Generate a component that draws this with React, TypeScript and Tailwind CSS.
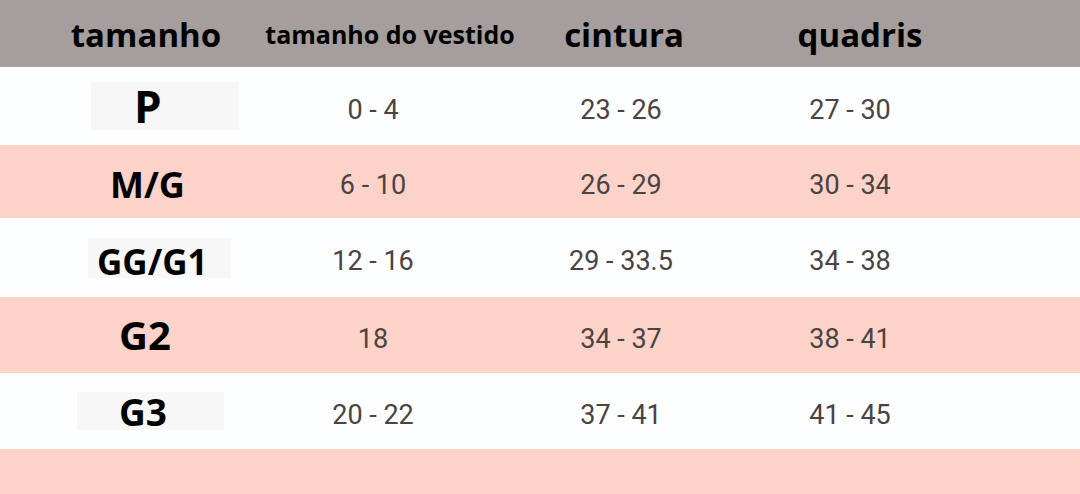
type Row = {
  size: string;
  dress: string;
  waist: string;
  hips: string;
  rowClass: string;
  boxClass: string;
  labelClass: string;
};

const rows: Row[] = [
  {
    size: "P",
    dress: "0 - 4",
    waist: "23 - 26",
    hips: "27 - 30",
    rowClass: "h-[78px] bg-[#fdfeff]",
    boxClass: "ml-[91px] w-[148px] h-[48px] bg-[#f7f7f7]",
    labelClass: "pl-[43px] text-[44px]",
  },
  {
    size: "M/G",
    dress: "6 - 10",
    waist: "26 - 29",
    hips: "30 - 34",
    rowClass: "h-[73px] bg-[#fdd2c8]",
    boxClass: "ml-[110px] h-[48px] mt-[6px]",
    labelClass: "text-[36px]",
  },
  {
    size: "GG/G1",
    dress: "12 - 16",
    waist: "29 - 33.5",
    hips: "34 - 38",
    rowClass: "h-[79px] bg-[#fdfeff]",
    boxClass: "ml-[88px] w-[143px] h-[40px] bg-[#f7f7f7] items-end",
    labelClass: "pl-[9px] text-[35px] translate-y-[1px]",
  },
  {
    size: "G2",
    dress: "18",
    waist: "34 - 37",
    hips: "38 - 41",
    rowClass: "h-[76px] bg-[#fdd2c8]",
    boxClass: "ml-[119px] h-[48px]",
    labelClass: "text-[40px]",
  },
  {
    size: "G3",
    dress: "20 - 22",
    waist: "37 - 41",
    hips: "41 - 45",
    rowClass: "h-[76px] bg-[#fdfeff]",
    boxClass: "ml-[77px] w-[147px] h-[38px] bg-[#f7f7f7]",
    labelClass: "pl-[42px] text-[37px]",
  },
];

function SizeRow({ row }: { row: Row }) {
  return (
    <div className={`flex items-center ${row.rowClass}`}>
      <div className="w-[300px] flex items-center">
        <div className={`flex items-center ${row.boxClass}`}>
          <span
            className={`font-['Open_Sans',sans-serif] font-bold leading-none text-black ${row.labelClass}`}
          >
            {row.size}
          </span>
        </div>
      </div>
      <div className="flex w-[146px] justify-center pt-[8px]">{row.dress}</div>
      <div className="flex w-[350px] justify-center pt-[8px]">{row.waist}</div>
      <div className="flex w-[108px] justify-center pt-[8px]">{row.hips}</div>
    </div>
  );
}

export default function App() {
  return (
    <div className="w-[1080px] h-[494px] overflow-hidden bg-[#fdd2c8] font-['Roboto',sans-serif] text-[27px] text-[#4a4343]">
      <header className="h-[67px] bg-[#a59e9c] flex items-center pt-[2px] font-['Open_Sans',sans-serif] font-bold text-black leading-none">
        <div className="w-[292px] text-center text-[33px]">tamanho</div>
        <div className="w-[196px] flex justify-center text-[25px] whitespace-nowrap">
          tamanho do vestido
        </div>
        <div className="w-[272px] text-center text-[33px]">cintura</div>
        <div className="w-[200px] text-center text-[33px]">quadris</div>
      </header>
      {rows.map((row) => (
        <SizeRow key={row.size} row={row} />
      ))}
    </div>
  );
}
